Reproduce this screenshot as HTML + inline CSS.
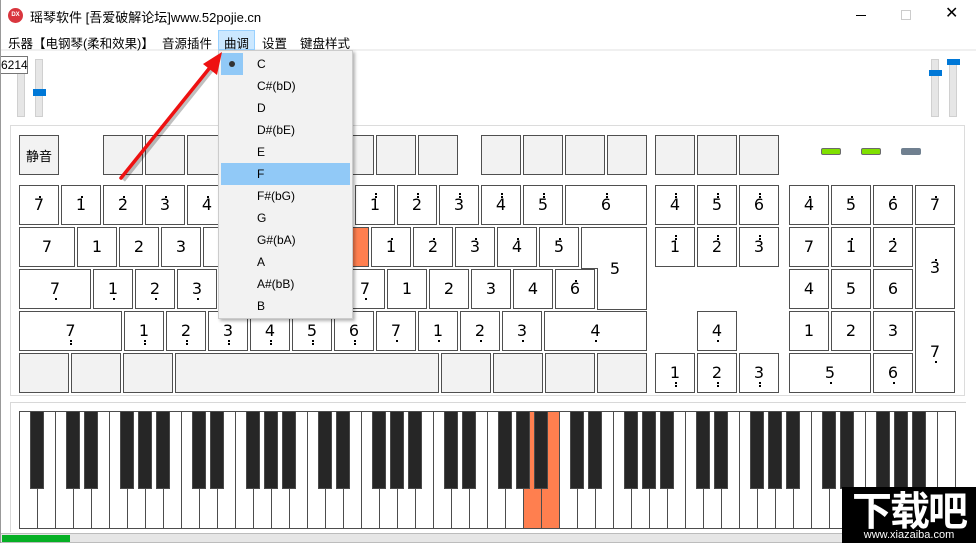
<!DOCTYPE html>
<html><head><meta charset="utf-8"><style>
*{margin:0;padding:0;box-sizing:border-box}
body{width:976px;height:543px;overflow:hidden;background:#fff;position:relative;font-family:"Liberation Sans","Noto Sans CJK SC",sans-serif;font-size:12px;color:#000}
.a{position:absolute}
.k{position:absolute;border:1px solid #4f4f4f;background:#fff;height:40px;width:40px}
.k.e{background:#f2f2f2}
.d{position:absolute;left:0;right:0;text-align:center;font-size:16px;line-height:16px;font-family:"DejaVu Sans","Liberation Sans",sans-serif}
.dot{position:absolute;width:2px;height:2px;background:#000}
.mi{position:absolute;left:38px;font-size:12px}
</style></head><body>
<!-- title -->
<div class="a" style="left:8px;top:8px;width:15px;height:15px;border-radius:50%;background:#d9363e;color:#fff;font-size:6px;line-height:15px;text-align:center;font-weight:bold">DX</div>
<div class="a" style="left:30px;top:7px;font-size:13px">瑶琴软件 [吾爱破解论坛]www.52pojie.cn</div>
<div class="a" style="left:856px;top:15px;width:10px;height:1px;background:#000"></div>
<div class="a" style="left:901px;top:10px;width:10px;height:10px;border:1px solid #ccc"></div>
<div class="a" style="left:945px;top:6px;font-size:16px;line-height:16px">✕</div>
<!-- menu -->
<div class="a" style="left:0;top:49px;width:976px;height:2px;background:#f0f0f0"></div>
<div class="a" style="left:8px;top:33px;font-size:12.5px">乐器【电钢琴(柔和效果)】</div>
<div class="a" style="left:162px;top:33px;font-size:12.5px">音源插件</div>
<div class="a" style="left:218px;top:30px;width:37px;height:20px;background:#cce8ff;border:1px solid #99d1ff"></div>
<div class="a" style="left:224px;top:33px;font-size:12.5px">曲调</div>
<div class="a" style="left:262px;top:33px;font-size:12.5px">设置</div>
<div class="a" style="left:300px;top:33px;font-size:12.5px">键盘样式</div>
<!-- sliders -->
<div class="a" style="left:17px;top:59px;width:8px;height:58px;background:#e6e6e6;border:1px solid #d0d0d0"></div>
<div class="a" style="left:35px;top:59px;width:8px;height:58px;background:#e6e6e6;border:1px solid #d0d0d0"></div>
<div class="a" style="left:33px;top:89px;width:13px;height:7px;background:#0078d7"></div>
<div class="a" style="left:931px;top:59px;width:8px;height:58px;background:#e6e6e6;border:1px solid #d0d0d0"></div>
<div class="a" style="left:949px;top:59px;width:8px;height:58px;background:#e6e6e6;border:1px solid #d0d0d0"></div>
<div class="a" style="left:929px;top:70px;width:13px;height:6px;background:#0078d7"></div>
<div class="a" style="left:947px;top:59px;width:13px;height:6px;background:#0078d7"></div>
<div class="a" style="left:-1px;top:56px;width:29px;height:18px;background:#fff;border:1px solid #767676;font-size:12px;line-height:16px;padding-left:1px">6214</div>
<!-- keyboard frame -->
<div class="a" style="left:10px;top:125px;width:955px;height:271px;border:1px solid #dcdcdc"></div>
<div id="kb"></div>
<svg class="a" style="left:581px;top:227px" width="66" height="83"><path d="M0.5 0.5H65.5V82.5H16.5V41.5H0.5Z" fill="#fff" stroke="#4f4f4f"/><text x="34" y="47" font-size="16" font-family="DejaVu Sans" text-anchor="middle">5</text></svg>
<div class="a" style="left:821px;top:148px;width:20px;height:7px;background:#80e000;border:1px solid #6a6a6a;border-radius:2px"></div>
<div class="a" style="left:861px;top:148px;width:20px;height:7px;background:#80e000;border:1px solid #6a6a6a;border-radius:2px"></div>
<div class="a" style="left:901px;top:148px;width:20px;height:7px;background:#708090;border-radius:2px"></div>
<!-- piano frame -->
<div class="a" style="left:10px;top:402px;width:956px;height:130px;border-top:1px solid #d8d8d8;border-left:1px solid #d8d8d8"></div>
<svg class="a" style="left:0;top:0" width="976" height="543" id="pn"></svg>
<div class="a" style="left:0;top:533px;width:976px;height:10px;background:#e6e6e6;border:1px solid #bcbcbc"></div>
<div class="a" style="left:2px;top:535px;width:68px;height:7px;background:#06b025"></div>
<div class="a" style="left:0;top:0;width:1px;height:543px;background:#999"></div>
<!-- logo -->
<div class="a" style="left:842px;top:487px;width:134px;height:56px;background:#000;color:#fff;text-align:center">
<div style="font-size:40px;line-height:42px;font-weight:bold;letter-spacing:-2px;font-family:'Noto Sans CJK SC',sans-serif">下载吧</div>
<div style="font-size:11px;line-height:12px">www.xiazaiba.com</div></div>
<!-- dropdown -->
<div class="a" style="left:218px;top:50px;width:135px;height:269px;background:#f2f2f2;border:1px solid #ccc;box-shadow:2px 2px 3px rgba(0,0,0,.3)" id="dd">
<div class="a" style="left:2px;top:2px;width:22px;height:22px;background:#91c9f7"></div>
<div class="a" style="left:10px;top:10px;width:6px;height:6px;border-radius:50%;background:#333"></div>
<div class="a" style="left:2px;top:112px;width:129px;height:22px;background:#91c9f7"></div>
</div>
<svg class="a" style="left:0;top:0" width="400" height="200"><line x1="121" y1="178" x2="214" y2="62" stroke="rgba(0,0,0,.25)" stroke-width="5" transform="translate(2,2)"/><line x1="121" y1="178" x2="212" y2="65" stroke="#ee1111" stroke-width="3.5" stroke-linecap="round"/><polygon points="222,52 217,75 203,64" fill="#ee1111"/></svg>
<script>
var kb=document.getElementById('kb'),h='';
function K(x,y,w,t,d,bg,hh){h+='<div class="k'+(t===''?' e':'')+'" style="left:'+x+'px;top:'+y+'px;width:'+w+'px;height:'+(hh||40)+'px;'+(bg?'background:'+bg:'')+'">';
if(t!==''){var H=hh||40,cy=H/2-9;h+='<div class="d" style="top:'+cy+'px">'+t+'</div>';var cx=w/2-1.5;
for(var i=0;i<Math.abs(d);i++){var yy=d>0?cy-1-i*3:cy+17+i*3;h+='<div class="dot" style="left:'+cx+'px;top:'+yy+'px"></div>';}}
h+='</div>';}
K(19,135,40,'');h+='<div class="a" style="left:19px;top:146px;width:40px;text-align:center;font-size:13px">静音</div>';
[103,145,187,229,292,334,376,418,481,523,565,607,655,697,739].forEach(function(x){K(x,135,40,'')});
var r1='7123456712345';for(var i=0;i<13;i++)K(19+42*i,185,40,r1[i],i<8?1:2);K(565,185,82,'6',2);
K(19,227,56,'7',0);for(i=0;i<6;i++)K(77+42*i,227,40,'123456'[i],0);K(329,227,40,'7',0,'#ff7f4f');for(i=0;i<5;i++)K(371+42*i,227,40,'12345'[i],1);
K(19,269,72,'7',-1);for(i=0;i<6;i++)K(93+42*i,269,40,'123456'[i],-1);K(345,269,40,'7',-1);for(i=0;i<4;i++)K(387+42*i,269,40,'1234'[i],0);K(555,269,40,'6',1);
K(19,311,103,'7',-2);for(i=0;i<6;i++)K(124+42*i,311,40,'123456'[i],-2);K(376,311,40,'7',-1);for(i=0;i<3;i++)K(418+42*i,311,40,'123'[i],-1);K(544,311,103,'4',-1);
[[19,50],[71,50],[123,50],[175,264],[441,50],[493,50],[545,50],[597,50]].forEach(function(a){K(a[0],353,a[1],'')});
K(655,185,40,'4',2);K(697,185,40,'5',2);K(739,185,40,'6',2);
K(655,227,40,'1',2);K(697,227,40,'2',2);K(739,227,40,'3',2);
K(697,311,40,'4',-1);K(655,353,40,'1',-2);K(697,353,40,'2',-2);K(739,353,40,'3',-2);
K(789,185,40,'4',1);K(831,185,40,'5',1);K(873,185,40,'6',1);K(915,185,40,'7',1);
K(789,227,40,'7',0);K(831,227,40,'1',1);K(873,227,40,'2',1);K(915,227,40,'3',1,'',82);
K(789,269,40,'4',0);K(831,269,40,'5',0);K(873,269,40,'6',0);
K(789,311,40,'1',0);K(831,311,40,'2',0);K(873,311,40,'3',0);K(915,311,40,'7',-1,'',82);
K(789,353,82,'5',-1);K(873,353,40,'6',-1);
kb.innerHTML=h;
var s='';for(i=0;i<52;i++){var x=19+18*i;s+='<rect x="'+(x+.5)+'" y="411.5" width="18" height="117" fill="'+(i==28||i==29?'#ff7f4f':'#fff')+'" stroke="#4d4d4d"/>';}
for(i=0;i<51;i++){var n=(i+5)%7;if(n==2||n==6)continue;var bx=19+18*(i+1)-7;s+='<rect x="'+(bx+.5)+'" y="411.5" width="13" height="77" fill="#262626" stroke="#4a4a4a"/>';}
document.getElementById('pn').innerHTML=s;
var dd=document.getElementById('dd'),m=['C','C#(bD)','D','D#(bE)','E','F','F#(bG)','G','G#(bA)','A','A#(bB)','B'],q='';
m.forEach(function(t,i){q+='<div class="mi" style="top:'+(6+22*i)+'px">'+t+'</div>'});dd.insertAdjacentHTML('beforeend',q);
</script>
</body></html>
